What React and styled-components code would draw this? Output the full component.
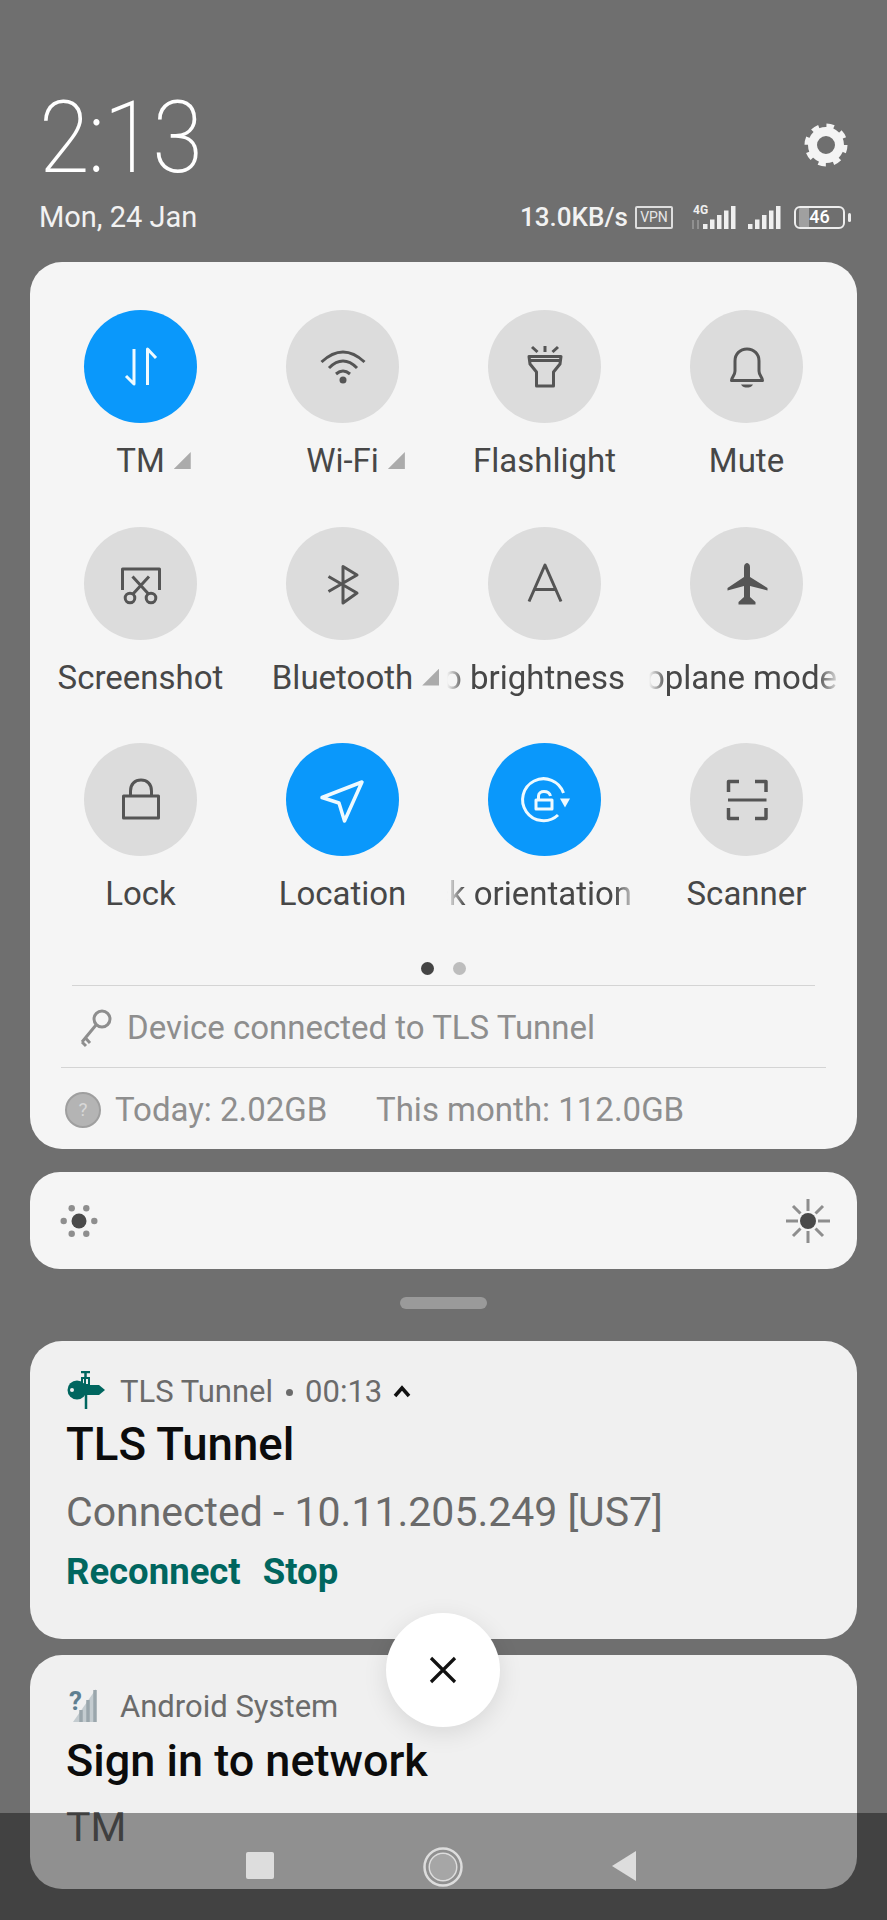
import React from "react";
import styled, { createGlobalStyle } from "styled-components";

const Global = createGlobalStyle`
  html, body { margin: 0; padding: 0; background: #6f6f6f; }
  * { box-sizing: border-box; }
`;

const Page = styled.div`
  position: relative;
  width: 887px;
  height: 1920px;
  overflow: hidden;
  background: #6f6f6f;
  font-family: Roboto, "Liberation Sans", sans-serif;
  display: flex;
  flex-direction: column;
  padding: 0 30px;
`;

const Header = styled.header`
  height: 262px;
  margin: 0 -30px;
  padding: 88px 36px 0 39px;
  display: flex;
  flex-direction: column;
  color: #fff;
`;
const ClockRow = styled.div`
  height: 100px;
  display: flex;
  justify-content: space-between;
  align-items: center;
`;
const Clock = styled.div`
  font-weight: 200;
  font-size: 100px;
  line-height: 100px;
  letter-spacing: -2px;
  color: #fff;
  transform: scaleX(0.92);
  transform-origin: left center;
`;
const Gear = styled.svg`
  width: 44px;
  height: 44px;
  margin: 14px 3px 0 0;
`;
const InfoRow = styled.div`
  margin-top: 11px;
  height: 36px;
  display: flex;
  justify-content: space-between;
  align-items: center;
`;
const DateText = styled.div`
  font-size: 29px;
  line-height: 36px;
  color: #f2f2f2;
`;
const Status = styled.div`
  display: flex;
  align-items: center;
  height: 26px;
`;
const Speed = styled.span`
  font-size: 26px;
  font-weight: 500;
  color: #f2f2f2;
  margin-right: 7px;
`;
const VpnBadge = styled.span`
  width: 38px;
  height: 23px;
  border: 2px solid #dedede;
  border-radius: 2px;
  font-size: 14px;
  line-height: 19px;
  text-align: center;
  color: #e6e6e6;
  margin-right: 18px;
`;
const Signal = styled.svg`
  display: block;
  height: 26px;
  margin-right: ${(p) => p.$gap}px;
`;
const Battery = styled.span`
  position: relative;
  width: 51px;
  height: 23px;
  border: 2.5px solid #eee;
  border-radius: 6px;
  font-size: 18px;
  font-weight: 500;
  line-height: 18px;
  text-align: center;
  color: #fff;
  background: linear-gradient(90deg, #a0a0a0 0 10px, transparent 10px);
  background-origin: content-box;
  background-clip: content-box;
  padding: 0 3px;
  &::after {
    content: "";
    position: absolute;
    right: -8px;
    top: 5px;
    width: 3px;
    height: 9px;
    border-radius: 2px;
    background: #eee;
  }
`;
const BatteryWrap = styled.span`
  display: flex;
  margin-right: 6px;
`;

const Panel = styled.section`
  height: 887px;
  background: #f5f5f5;
  border-radius: 32px;
  padding-top: 48px;
  display: flex;
  flex-direction: column;
`;
const Grid = styled.div`
  display: grid;
  grid-template-columns: repeat(4, 202px);
  grid-auto-rows: 216.5px;
  justify-content: center;
`;
const Tile = styled.div`
  display: flex;
  flex-direction: column;
  align-items: center;
`;
const Round = styled.div`
  flex: none;
  width: 113px;
  height: 113px;
  border-radius: 50%;
  background: ${(p) => (p.$on ? "#0a98fb" : "#dcdcdc")};
  color: ${(p) => (p.$on ? "#eefaff" : "#555")};
  display: flex;
  align-items: center;
  justify-content: center;
`;
const TileIcon = styled.svg`
  width: 56px;
  height: 56px;
  fill: none;
  stroke: currentColor;
  stroke-width: 3;
  stroke-linejoin: round;
`;
const Label = styled.div`
  position: relative;
  margin-top: 20px;
  font-size: 33px;
  line-height: 36px;
  color: #474747;
  white-space: nowrap;
  ${(p) =>
    p.$more &&
    `&::after {
      content: "";
      position: absolute;
      left: 100%;
      margin-left: 9px;
      top: 9px;
      width: 17px;
      height: 17px;
      background: #ababab;
      clip-path: polygon(100% 0, 100% 100%, 0 100%);
    }`}
`;
const Marquee = styled.div`
  margin-top: 20px;
  width: 196px;
  display: flex;
  justify-content: flex-end;
  padding-right: ${(p) => p.$end}px;
  overflow: hidden;
  white-space: nowrap;
  font-size: 33px;
  line-height: 36px;
  color: #474747;
  ${(p) => {
    const mask = `linear-gradient(90deg, transparent 0, #000 18px, ${
      p.$solid ? "#000 196px" : "#000 168px, transparent 192px"
    })`;
    return `-webkit-mask-image: ${mask}; mask-image: ${mask};`;
  }}
`;
const MarqueeText = styled.span`
  flex: none;
`;
const Dots = styled.div`
  margin-top: 2.5px;
  display: flex;
  justify-content: center;
  gap: 19px;
`;
const Dot = styled.span`
  width: 13px;
  height: 13px;
  border-radius: 50%;
  background: ${(p) => (p.$on ? "#444" : "#bdbdbd")};
`;
const Divider = styled.div`
  height: 1.5px;
  background: #d4d4d4;
  margin: ${(p) => p.$top}px ${(p) => p.$side}px 0;
`;
const TunnelRow = styled.div`
  height: 81px;
  padding: 2px 0 0 49px;
  display: flex;
  align-items: center;
  gap: 14px;
  font-size: 33px;
  color: #8e8e8e;
`;
const KeyIcon = styled.svg`
  width: 34px;
  height: 40px;
  fill: none;
  stroke: #8e8e8e;
  stroke-width: 3;
`;
const UsageRow = styled.div`
  height: 82px;
  padding: 2px 0 0 35px;
  display: flex;
  align-items: center;
  font-size: 33px;
  color: #8e8e8e;
`;
const Help = styled.span`
  width: 36px;
  height: 36px;
  border-radius: 50%;
  background: #b4b4b4;
  border: 2px solid #9f9f9f;
  color: #d8d8d8;
  font-size: 19px;
  line-height: 32px;
  text-align: center;
  margin-right: 14px;
`;
const UsageToday = styled.span`
  width: 261px;
`;

const Brightness = styled.section`
  margin-top: 23px;
  height: 97px;
  background: #f5f5f5;
  border-radius: 30px;
  padding: 0 26px;
  display: flex;
  align-items: center;
  justify-content: space-between;
`;
const SunIcon = styled.svg`
  width: 46px;
  height: 50px;
`;
const Handle = styled.div`
  align-self: center;
  margin-top: 28px;
  width: 87px;
  height: 12px;
  border-radius: 6px;
  background: #9a9a9a;
`;

const Card = styled.article`
  flex: none;
  height: ${(p) => p.$h}px;
  margin-top: ${(p) => p.$mt}px;
  background: #f0f0f0;
  border-radius: 32px;
  padding: ${(p) => p.$pt}px 36px 0;
`;
const CardHead = styled.div`
  display: flex;
  align-items: center;
  height: 40px;
  font-size: 31px;
  color: #6b6b6b;
`;
const AppMark = styled.svg`
  width: 42px;
  height: 40px;
  margin-right: 12px;
  flex: none;
`;
const Sep = styled.span`
  width: 7px;
  height: 7px;
  border-radius: 50%;
  background: #6b6b6b;
  margin: 2px 12px 0 13px;
`;
const Caret = styled.svg`
  width: 20px;
  height: 14px;
  margin-left: 10px;
  fill: none;
  stroke: #111;
  stroke-width: 3.5;
`;
const CardTitle = styled.h3`
  margin: ${(p) => p.$mt}px 0 0;
  font-size: ${(p) => p.$size}px;
  line-height: 56px;
  font-weight: 500;
  color: #0c0c0c;
`;
const CardBody = styled.p`
  margin: ${(p) => p.$mt}px 0 0;
  font-size: 41px;
  line-height: 56px;
  color: #6a6a6a;
`;
const Actions = styled.div`
  margin-top: 10px;
  display: flex;
  gap: 22px;
  font-size: 36.5px;
  line-height: 44px;
  font-weight: 700;
  color: #00665f;
`;

const CloseButton = styled.button`
  position: absolute;
  left: 386px;
  top: 1613px;
  width: 114px;
  height: 114px;
  padding: 0;
  border: 0;
  border-radius: 50%;
  background: #fff;
  box-shadow: 0 6px 24px rgba(0, 0, 0, 0.1);
  display: flex;
  align-items: center;
  justify-content: center;
  z-index: 2;
`;
const CloseIcon = styled.svg`
  width: 30px;
  height: 30px;
  stroke: #111;
  stroke-width: 3.2;
  fill: none;
`;
const NavBar = styled.nav`
  position: absolute;
  left: 0;
  right: 0;
  bottom: 0;
  height: 107px;
  background: rgba(0, 0, 0, 0.4);
  padding: 34px 0 0 246px;
  display: flex;
  align-items: flex-start;
  gap: 149px;
`;
const NavIcon = styled.svg`
  display: block;
  height: 40px;
  width: ${(p) => p.$w}px;
`;

const icons = {
  data: (<><path d="M21 10V45L13 37" /><path d="M34.5 46V10L43 19" /></>),
  wifi: (<><path d="M6.5 23Q28 3 49.5 23" /><path d="M14 29Q28 15 42 29" /><path d="M21 35Q28 29 35 35" /><circle cx="28" cy="41" r="3.5" fill="currentColor" stroke="none" /></>),
  flash: (<><path d="M28 7V13M15 8L20.5 13M41 8L35.5 13" /><path d="M12 17.5H44L43 25L36.5 33V47H19.5V33L13 25Z" /><path d="M13 21.5H43" /></>),
  bell: (<><path d="M12.5 41.5H43.5C43.5 38 40 37 40 32V22C40 15 35 10 28 10C21 10 16 15 16 22V32C16 37 12.5 38 12.5 41.5Z" /><path d="M22 45.5H34C33 48 30 48.5 28 48.5C26 48.5 23 48 22 45.5Z" fill="currentColor" stroke="none" /></>),
  shot: (<><path d="M9.5 35V14H46.5V35" /><path d="M19.5 21.5L36 39.5M36 21.5L19.5 39.5" /><circle cx="17" cy="43" r="4.8" /><circle cx="38" cy="43" r="4.8" /></>),
  bt: (<path d="M13.5 36.5L42 20L28 11.5V48L42 38L13.5 21.5" />),
  auto: (<path d="M12 46.5L28 10L44 46.5M17.5 34.5H38.5" />),
  plane: (<path d="M25 12C25 9 27 8 28 8C29 8 31 9 31 12V22L48.5 33V35.5L31 31V42L36.5 47V49.5H19.5V47L25 42V31L8.5 35.5V33L25 22Z" fill="currentColor" stroke="none" />),
  lock: (<><rect x="10.5" y="24" width="35" height="22" /><path d="M17.5 24V19C17.5 12 22 8 28 8C34 8 38.5 12 38.5 19V24" /></>),
  loc: (<path d="M47 10L7 25.5L24 31L29.5 49Z" strokeWidth="3.5" />),
  rot: (<><path d="M41 43A21 21 0 1 1 46.5 21" /><path d="M43 26.5H53L48 35.5Z" fill="currentColor" stroke="none" /><rect x="19" y="28" width="16" height="9" /><path d="M21.5 28V24C21.5 18 32 18 33.5 24" /></>),
  scan: (<><path d="M9.5 20V9.5H20M36 9.5H47V20M9.5 36V46.5H20M36 46.5H47V36" strokeWidth="3.5" /><path d="M9 28H47.5" /></>),
};

function Tile1({ icon, on, label, more, full, end, solid }) {
  return (
    <Tile>
      <Round $on={on}>
        <TileIcon viewBox="0 0 56 56">{icons[icon]}</TileIcon>
      </Round>
      {full ? (
        <Marquee $end={end} $solid={solid}><MarqueeText>{full}</MarqueeText></Marquee>
      ) : (
        <Label $more={more}>{label}</Label>
      )}
    </Tile>
  );
}

const bars = [0, 1, 2, 3, 4];
const SignalBars = ({ x }) =>
  bars.map((i) => (
    <rect key={i} x={x + i * 7} y={20 - i * 4.5} width="4.5" height={5 + i * 4.5} fill="#efefef" />
  ));

export default function App() {
  return (
    <Page>
      <Global />
      <Header>
        <ClockRow>
          <Clock>2:13</Clock>
          <Gear viewBox="0 0 44 44" fill="none" stroke="#f4f4f4">
            <circle cx="22" cy="22" r="19" strokeWidth="5" strokeDasharray="7.4 7.5" />
            <circle cx="22" cy="22" r="13.5" strokeWidth="9" />
          </Gear>
        </ClockRow>
        <InfoRow>
          <DateText>Mon, 24 Jan</DateText>
          <Status>
            <Speed>13.0KB/s</Speed>
            <VpnBadge>VPN</VpnBadge>
            <Signal viewBox="0 0 45 26" width="45" $gap={11}>
              <text x="2" y="10" fontSize="12" fontWeight="700" fontFamily="Roboto, sans-serif" fill="#efefef">4G</text>
              <path d="M2 16V25M7 16V25" stroke="#9c9c9c" strokeWidth="1.5" />
              <SignalBars x={12} />
            </Signal>
            <Signal viewBox="0 0 34 26" width="34" $gap={13}>
              <SignalBars x={1} />
            </Signal>
            <BatteryWrap>
              <Battery>46</Battery>
            </BatteryWrap>
          </Status>
        </InfoRow>
      </Header>

      <Panel>
        <Grid>
          <Tile1 icon="data" on label="TM" more />
          <Tile1 icon="wifi" label="Wi-Fi" more />
          <Tile1 icon="flash" label="Flashlight" />
          <Tile1 icon="bell" label="Mute" />
          <Tile1 icon="shot" label="Screenshot" />
          <Tile1 icon="bt" label="Bluetooth" more />
          <Tile1 icon="auto" full="Auto brightness" end={17.5} solid />
          <Tile1 icon="plane" full="Aeroplane mode" end={7.5} />
          <Tile1 icon="lock" label="Lock" />
          <Tile1 icon="loc" on label="Location" />
          <Tile1 icon="rot" on full="Lock orientation" end={10.5} />
          <Tile1 icon="scan" label="Scanner" />
        </Grid>
        <Dots>
          <Dot $on />
          <Dot />
        </Dots>
        <Divider $top={10} $side={42} />
        <TunnelRow>
          <KeyIcon viewBox="0 0 34 40">
            <circle cx="23" cy="11" r="8" />
            <path d="M17 17L3 34M6.5 30L11 35M3 34L7 38" />
          </KeyIcon>
          Device connected to TLS Tunnel
        </TunnelRow>
        <Divider $top={0} $side={31} />
        <UsageRow>
          <Help>?</Help>
          <UsageToday>Today: 2.02GB</UsageToday>
          This month: 112.0GB
        </UsageRow>
      </Panel>

      <Brightness>
        <SunIcon viewBox="0 0 46 50">
          <circle cx="23" cy="25" r="7.5" fill="#4a4a4a" />
          <g fill="#8e8e8e">
            <circle cx="7.7" cy="25" r="3.2" />
            <circle cx="38.3" cy="25" r="3.2" />
            <circle cx="15.7" cy="12.3" r="3.2" />
            <circle cx="30.3" cy="12.3" r="3.2" />
            <circle cx="15.7" cy="37.7" r="3.2" />
            <circle cx="30.3" cy="37.7" r="3.2" />
          </g>
        </SunIcon>
        <SunIcon viewBox="0 0 46 50">
          <circle cx="23" cy="25" r="8" fill="#4a4a4a" />
          <path d="M23 3V15M23 35V47M1 25H13M33 25H45M8 10L15.5 17.5M30.5 32.5L38 40M38 10L30.5 17.5M15.5 32.5L8 40" stroke="#8e8e8e" strokeWidth="3" />
        </SunIcon>
      </Brightness>

      <Handle />

      <Card $h={298} $mt={32} $pt={30}>
        <CardHead>
          <AppMark viewBox="0 0 42 40">
            <g fill="#00665f">
              <circle cx="11" cy="19" r="9.5" />
              <path d="M12 14H33L39 19L33 24H12Z" />
              <rect x="18" y="8" width="2" height="7" />
            </g>
            <path d="M15 1H24M19.5 1V7M20 22V38" stroke="#00665f" strokeWidth="2.5" fill="none" />
            <rect x="16" y="7" width="7" height="7" fill="none" stroke="#00665f" strokeWidth="2" />
            <circle cx="6" cy="19" r="2" fill="#f0f0f0" />
          </AppMark>
          TLS Tunnel
          <Sep />
          00:13
          <Caret viewBox="0 0 20 14"><path d="M3 12L10 4L17 12" /></Caret>
        </CardHead>
        <CardTitle $mt={6} $size={45.6}>TLS Tunnel</CardTitle>
        <CardBody $mt={10.5}>Connected - 10.11.205.249 [US7]</CardBody>
        <Actions>
          <span>Reconnect</span>
          <span>Stop</span>
        </Actions>
      </Card>

      <Card $h={234} $mt={16} $pt={31}>
        <CardHead>
          <AppMark viewBox="0 0 42 40">
            <text x="3" y="24" fontSize="26" fontWeight="700" fontFamily="Roboto, sans-serif" fill="#5f7f91">?</text>
            <path d="M7 36L30 3V36Z" fill="#c4ccd0" />
            <path d="M15 36V24M22 36V14M29 36V4" stroke="#9aa6ac" strokeWidth="3.5" />
          </AppMark>
          Android System
        </CardHead>
        <CardTitle $mt={7} $size={45}>Sign in to network</CardTitle>
        <CardBody $mt={10}>TM</CardBody>
      </Card>

      <CloseButton aria-label="Close">
        <CloseIcon viewBox="0 0 30 30"><path d="M3 3L27 27M27 3L3 27" /></CloseIcon>
      </CloseButton>

      <NavBar>
        <NavIcon $w={28} viewBox="0 0 28 40"><rect y="5" width="28" height="27" rx="2" fill="#ddd" /></NavIcon>
        <NavIcon $w={40} viewBox="0 0 40 40">
          <circle cx="20" cy="20" r="18.5" fill="none" stroke="#ddd" strokeWidth="2.5" />
          <circle cx="20" cy="20" r="13.5" fill="none" stroke="#ddd" strokeWidth="2" />
          <circle cx="20" cy="20" r="13" fill="#a6a6a6" />
        </NavIcon>
        <NavIcon $w={24} viewBox="0 0 24 40"><path d="M24 4V34L0 19Z" fill="#ddd" /></NavIcon>
      </NavBar>
    </Page>
  );
}
